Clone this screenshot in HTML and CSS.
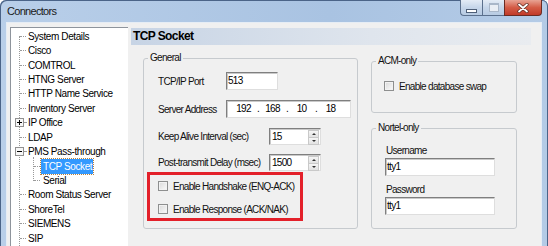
FILE: index.html
```html
<!DOCTYPE html>
<html lang="en">
<head>
    <meta charset="UTF-8">
    <title>Connectors</title>
    <link rel="stylesheet" href="styles.css">
</head>
<body>
    <div class="window">
        <div class="titlebar">
            <span class="title">Connectors</span>
            <div class="caption-buttons">
                <span class="cap-btn cap-min"><span class="glyph-min"></span></span>
                <span class="cap-btn cap-max"><span class="glyph-max"></span></span>
                <span class="cap-btn cap-close">
                    <svg width="12" height="10" viewBox="0 0 12 10">
                        <path d="M2 1.5L10 8.5M10 1.5L2 8.5" stroke="#5a2a22" stroke-width="3.2" stroke-linecap="round"/>
                        <path d="M2 1.5L10 8.5M10 1.5L2 8.5" stroke="#fff" stroke-width="1.8" stroke-linecap="round"/>
                    </svg>
                </span>
            </div>
        </div>

        <div class="client">
            <div class="tree">
                <ul class="tree-root">
                    <li><div class="node"><span class="twig"></span>System Details</div></li>
                    <li><div class="node"><span class="twig"></span>Cisco</div></li>
                    <li><div class="node"><span class="twig"></span>COMTROL</div></li>
                    <li><div class="node"><span class="twig"></span>HTNG Server</div></li>
                    <li><div class="node"><span class="twig"></span>HTTP Name Service</div></li>
                    <li><div class="node"><span class="twig"></span>Inventory Server</div></li>
                    <li>
                        <div class="node">
                            <svg class="expander" width="9" height="9" viewBox="0 0 9 9">
                                <rect x="0.5" y="0.5" width="8" height="8" fill="#f7f7f7" stroke="#919191"/>
                                <path d="M2 4.5H7M4.5 2V7" stroke="#000"/>
                            </svg>
                            <span class="twig short"></span>IP Office
                        </div>
                    </li>
                    <li><div class="node"><span class="twig"></span>LDAP</div></li>
                    <li>
                        <div class="node">
                            <svg class="expander" width="9" height="9" viewBox="0 0 9 9">
                                <rect x="0.5" y="0.5" width="8" height="8" fill="#f7f7f7" stroke="#919191"/>
                                <path d="M2 4.5H7" stroke="#000"/>
                            </svg>
                            <span class="twig short"></span>PMS Pass-through
                        </div>
                        <ul class="tree-children">
                            <li><div class="node"><span class="twig"></span><span class="selected">TCP Socket</span></div></li>
                            <li><div class="node"><span class="twig"></span><span class="child-text">Serial</span></div></li>
                        </ul>
                    </li>
                    <li><div class="node"><span class="twig"></span>Room Status Server</div></li>
                    <li><div class="node"><span class="twig"></span>ShoreTel</div></li>
                    <li><div class="node"><span class="twig"></span>SIEMENS</div></li>
                    <li><div class="node"><span class="twig"></span>SIP</div></li>
                </ul>
            </div>

            <div class="pane">
                <div class="pane-header">TCP Socket</div>
                <div class="pane-body">
                    <fieldset class="group group-general">
                        <legend>General</legend>
                        <div class="general-body">
                            <div class="field-row">
                                <span class="lbl lbl-short">TCP/IP Port</span>
                                <span class="textbox port">513</span>
                            </div>
                            <div class="field-row gap-10">
                                <span class="lbl lbl-short">Server Address</span>
                                <span class="textbox address">
                                    <span class="octet">192</span><span class="dot">.</span>
                                    <span class="octet">168</span><span class="dot">.</span>
                                    <span class="octet">10</span><span class="dot">.</span>
                                    <span class="octet">18</span>
                                </span>
                            </div>
                            <div class="field-row spin-row gap-10">
                                <span class="lbl lbl-long">Keep Alive Interval (sec)</span>
                                <span class="textbox spin">
                                    <span class="spin-value">15</span>
                                    <span class="spin-buttons"><span class="spin-up"></span><span class="spin-down"></span></span>
                                </span>
                            </div>
                            <div class="field-row spin-row gap-9">
                                <span class="lbl lbl-long">Post-transmit Delay (msec)</span>
                                <span class="textbox spin">
                                    <span class="spin-value">1500</span>
                                    <span class="spin-buttons"><span class="spin-up"></span><span class="spin-down"></span></span>
                                </span>
                            </div>
                            <div class="highlight-box">
                                <div class="check-row">
                                    <span class="checkbox"></span>
                                    <span>Enable Handshake (ENQ-ACK)</span>
                                </div>
                                <div class="check-row second">
                                    <span class="checkbox"></span>
                                    <span>Enable Response (ACK/NAK)</span>
                                </div>
                            </div>
                        </div>
                    </fieldset>

                    <div class="side-col">
                        <fieldset class="group group-acm">
                            <legend>ACM-only</legend>
                            <div class="acm-body">
                                <div class="check-row">
                                    <span class="checkbox"></span>
                                    <span>Enable database swap</span>
                                </div>
                            </div>
                        </fieldset>
                        <fieldset class="group group-nortel">
                            <legend>Nortel-only</legend>
                            <div class="nortel-body">
                                <div class="lbl-top">Username</div>
                                <div class="textbox login">tty1</div>
                                <div class="lbl-top second">Password</div>
                                <div class="textbox login">tty1</div>
                            </div>
                        </fieldset>
                    </div>
                </div>
            </div>
        </div>
    </div>
</body>
</html>
```

FILE: styles.css
```css
body {
    margin: 0;
    padding: 0;
    font-family: "Liberation Sans", Arial, sans-serif;
    background-color: #ffffff;
}
ul {
    list-style: none;
    margin: 0;
    padding: 0;
}
.window {
    width: 548px;
    height: 246px;
    overflow: hidden;
    display: flex;
    flex-direction: column;
    background: linear-gradient(to right, #b9cfe9, #a9c3e2 60%, #b4cbe6);
    border-radius: 6px 6px 0 0;
    box-shadow: inset 1px 1px 0 #4b6488, inset -1px 0 0 #4b6488;
}
.titlebar {
    height: 22px;
    flex: none;
    display: flex;
    align-items: flex-start;
}
.title {
    padding: 5px 0 0 7px;
    font-size: 11px;
    line-height: 13px;
    letter-spacing: -0.7px;
    color: #1a1a1a;
}
.caption-buttons {
    margin-left: auto;
    margin-right: 6px;
    display: flex;
    height: 16px;
}
.cap-btn {
    box-sizing: border-box;
    height: 16px;
    display: flex;
    align-items: center;
    justify-content: center;
    border: 1px solid #5b708d;
    border-top: none;
}
.cap-min {
    width: 22px;
    border-radius: 0 0 0 4px;
    border-right: none;
    background: linear-gradient(#e4ecf6, #c6d6ea 50%, #b7cbe2);
}
.cap-max {
    width: 22px;
    border-right: none;
    background: linear-gradient(#e4ecf6, #c6d6ea 50%, #b7cbe2);
}
.cap-close {
    width: 38px;
    border-color: #6b2b22;
    border-radius: 0 0 4px 0;
    background: linear-gradient(#e8a394, #d45c46 50%, #c13a28);
}
.glyph-min {
    width: 9px;
    height: 2px;
    margin-top: 6px;
    background: #fff;
    border: 1px solid #4e5f78;
}
.glyph-max {
    width: 8px;
    height: 6px;
    border: 1px solid #a9b7c9;
    border-top-width: 2px;
    background: #e9eef5;
}
.client {
    flex: 1;
    margin: 0 6px;
    display: flex;
    background-color: #f0f0f0;
    border: 1px solid #e6edf5;
    border-bottom: none;
    padding: 4px 0 0 3px;
    min-height: 0;
}
.tree {
    width: 117px;
    background-color: #fff;
    border-left: 1px solid #8e949c;
    border-top: 1px solid #8e949c;
    padding-top: 1px;
    display: flex;
    flex-direction: column;
    font-size: 10px;
    letter-spacing: -0.4px;
    color: #000;
}
.tree-root {
    position: relative;
    flex: 1;
}
.tree-root::before {
    content: "";
    position: absolute;
    left: 8px;
    top: 7px;
    bottom: 0;
    border-left: 1px dotted #9a9a9a;
}
.node {
    display: flex;
    align-items: center;
    height: 14.43px;
    white-space: nowrap;
}
.twig {
    width: 6px;
    margin-left: 9px;
    margin-right: 2px;
    border-top: 1px dotted #9a9a9a;
}
.twig.short {
    width: 2px;
    margin-left: 0;
}
.expander {
    position: relative;
    margin-left: 4px;
    flex: none;
}
.tree-children {
    position: relative;
}
.tree-children::before {
    content: "";
    position: absolute;
    left: 22px;
    top: -2px;
    height: 24px;
    border-left: 1px dotted #9a9a9a;
}
.tree-children .twig {
    margin-left: 23px;
    margin-right: 1px;
}
.selected {
    background-color: #3399ff;
    color: #fff;
    padding: 1px 1px 1px 2px;
    line-height: 13px;
    outline: 1px dotted #b8823e;
}
.child-text {
    padding-left: 2px;
}
.pane {
    flex: 1;
    margin-left: 3px;
    padding-top: 1px;
    display: flex;
    flex-direction: column;
    font-size: 10px;
    letter-spacing: -0.7px;
    color: #111;
}
.pane-header {
    height: 17px;
    margin-right: 10px;
    padding-left: 2px;
    font-size: 12px;
    font-weight: bold;
    letter-spacing: -0.6px;
    line-height: 17px;
    color: #000;
    background: linear-gradient(to right, #c7d4e5, #dfe5ed 60%, #e9ecf0);
}
.pane-body {
    display: flex;
    gap: 13px;
    padding-left: 12px;
    margin-top: 7px;
}
.group {
    margin: 0;
    padding: 0;
    border: 1px solid #c6cace;
    border-radius: 3px;
    box-sizing: border-box;
    min-width: 0;
}
.group legend {
    margin-left: 4px;
    padding: 0 2px;
    font-size: 10px;
    line-height: 12px;
}
.group-general {
    width: 215px;
    height: 177px;
}
.general-body {
    padding: 8px 0 0 14px;
}
.field-row {
    display: flex;
    align-items: center;
    height: 18px;
}
.spin-row {
    height: 17px;
}
.gap-10 {
    margin-top: 10px;
}
.gap-9 {
    margin-top: 9px;
}
.lbl-short {
    width: 68px;
}
.lbl-long {
    width: 111px;
}
.textbox {
    box-sizing: border-box;
    height: 18px;
    background-color: #fff;
    border: 1px solid;
    border-color: #7f7f7f #dedede #dedede #7f7f7f;
    box-shadow: inset 1px 1px 0 #c9c9c9;
    padding: 0 1px;
    line-height: 16px;
    color: #000;
}
.port {
    width: 52px;
}
.address {
    width: 125px;
    display: flex;
    padding-left: 4px;
}
.octet {
    width: 25px;
    text-align: center;
}
.dot {
    width: 4px;
    text-align: center;
}
.spin {
    width: 52px;
    height: 17px;
    display: flex;
    padding-right: 1px;
    line-height: 15px;
}
.spin-value {
    flex: 1;
    padding-left: 1px;
}
.spin-buttons {
    width: 11px;
    display: flex;
    flex-direction: column;
    padding-top: 1px;
}
.spin-up, .spin-down {
    flex: 1;
    position: relative;
    background: linear-gradient(#f6f6f6, #e2e2e2);
    border: 1px solid #c9c9c9;
    margin-bottom: -1px;
}
.spin-up::after, .spin-down::after {
    content: "";
    position: absolute;
    left: 3px;
    top: 2px;
    border-left: 2px solid transparent;
    border-right: 2px solid transparent;
}
.spin-up::after {
    border-bottom: 2px solid #333;
}
.spin-down::after {
    border-top: 2px solid #333;
}
.highlight-box {
    box-sizing: border-box;
    width: 156px;
    height: 49px;
    margin: 1px 0 0 -11px;
    padding: 4px 0 0 8px;
    border: 3px solid #e3202a;
}
.check-row {
    display: flex;
    align-items: center;
    gap: 5px;
    height: 14px;
    white-space: nowrap;
}
.check-row.second {
    margin-top: 9px;
}
.checkbox {
    box-sizing: border-box;
    width: 10px;
    height: 10px;
    flex: none;
    border: 1px solid #8e8f8f;
    background: linear-gradient(135deg, #d9d9d9, #fbfbfb);
    box-shadow: inset 0 0 0 1px #f2f2f2;
}
.side-col {
    display: flex;
    flex-direction: column;
    gap: 9px;
    padding-top: 3px;
}
.group-acm {
    width: 146px;
    height: 58px;
}
.acm-body {
    padding: 12px 0 0 12px;
}
.group-nortel {
    width: 146px;
    height: 107px;
}
.nortel-body {
    padding: 11px 0 0 14px;
}
.lbl-top {
    height: 12px;
    line-height: 12px;
}
.lbl-top.second {
    margin-top: 8px;
}
.login {
    width: 110px;
    margin: 1px 0 0 -1px;
}
```
